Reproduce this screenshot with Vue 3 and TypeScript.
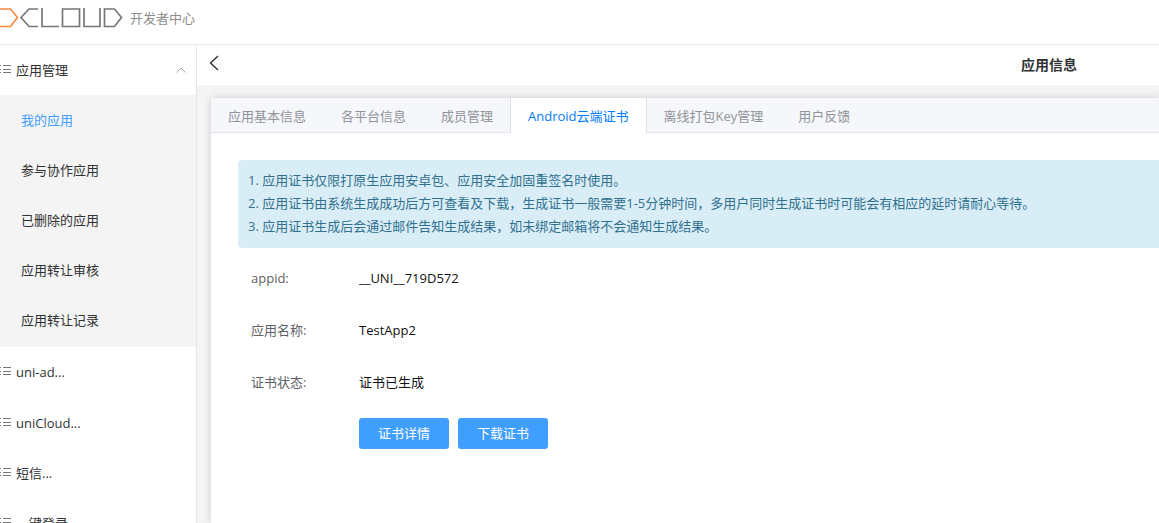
<script setup lang="ts">
import { ref } from 'vue'

const subItems: string[] = ['我的应用', '参与协作应用', '已删除的应用', '应用转让审核', '应用转让记录']
const activeItem = ref<string>('我的应用')
const groups: string[] = ['uni-ad...', 'uniCloud...', '短信...', '一键登录...']
const tabs: string[] = ['应用基本信息', '各平台信息', '成员管理', 'Android云端证书', '离线打包Key管理', '用户反馈']
const activeTab = ref<string>('Android云端证书')
const notices: string[] = [
  '1. 应用证书仅限打原生应用安卓包、应用安全加固重签名时使用。',
  '2. 应用证书由系统生成成功后方可查看及下载，生成证书一般需要1-5分钟时间，多用户同时生成证书时可能会有相应的延时请耐心等待。',
  '3. 应用证书生成后会通过邮件告知生成结果，如未绑定邮箱将不会通知生成结果。',
]
const fields: { label: string; value: string }[] = [
  { label: 'appid:', value: '__UNI__719D572' },
  { label: '应用名称:', value: 'TestApp2' },
  { label: '证书状态:', value: '证书已生成' },
]
</script>

<template>
  <div class="page">
    <header class="header">
      <a class="brand" href="#" aria-label="DCloud">
        <svg width="123" height="20" viewBox="0 0 123 20" fill="none" stroke-width="1.7">
          <path d="M0 1H10.5L17.5 9.5L10.5 18.5H0" stroke="#f58a42" />
          <g stroke="#777">
            <path d="M38 1H29L21 9.5L29 18.5H38" />
            <path d="M42 0V18.5H59" />
            <path d="M62.5 1H79.5V18.5H62.5Z" />
            <path d="M84 0V18.5H100V0" />
            <path d="M104.5 1H114.5L121.5 9.5L114.5 18.5H104.5Z" />
          </g>
        </svg>
      </a>
      <span class="subtitle">开发者中心</span>
    </header>
    <div class="body">
      <nav class="sidebar">
        <button class="group" type="button" aria-expanded="true">
          <svg class="list" width="12" height="10" viewBox="0 0 12 10" stroke="#777">
            <path d="M0 0.5H1M3 0.5H11M0 4.5H1M3 4.5H11M0 7.5H1M3 7.5H11" />
          </svg>
          <span>应用管理</span>
          <svg class="caret" width="10" height="6" viewBox="0 0 10 6" fill="none" stroke="#aaa">
            <path d="M0.5 5.5L5 1L9.5 5.5" />
          </svg>
        </button>
        <ul class="submenu">
          <li v-for="item in subItems" :key="item">
            <a href="#" :class="{ active: item === activeItem }" @click.prevent="activeItem = item">{{ item }}</a>
          </li>
        </ul>
        <button v-for="group in groups" :key="group" class="group" type="button">
          <svg class="list" width="12" height="10" viewBox="0 0 12 10" stroke="#777">
            <path d="M0 0.5H1M3 0.5H11M0 4.5H1M3 4.5H11M0 7.5H1M3 7.5H11" />
          </svg>
          <span>{{ group }}</span>
        </button>
      </nav>
      <main class="main">
        <div class="titlebar">
          <button class="back" type="button" aria-label="返回">
            <svg width="10" height="16" viewBox="0 0 10 16" fill="none" stroke="#303133" stroke-width="1.4">
              <path d="M9 1L1.5 8L9 15" />
            </svg>
          </button>
          <h1>应用信息</h1>
        </div>
        <section class="card">
          <div class="tabs" role="tablist">
            <button
              v-for="tab in tabs"
              :key="tab"
              type="button"
              role="tab"
              class="tab"
              :class="{ active: tab === activeTab }"
              :aria-selected="tab === activeTab"
              @click="activeTab = tab"
            >{{ tab }}</button>
          </div>
          <div class="panel">
            <div class="notice">
              <p v-for="line in notices" :key="line">{{ line }}</p>
            </div>
            <dl class="fields">
              <div v-for="field in fields" :key="field.label" class="field">
                <dt>{{ field.label }}</dt>
                <dd>{{ field.value }}</dd>
              </div>
            </dl>
            <div class="actions">
              <button type="button">证书详情</button>
              <button type="button">下载证书</button>
            </div>
          </div>
        </section>
      </main>
    </div>
  </div>
</template>

<style>
body {
  margin: 0;
}
</style>

<style scoped>
.page {
  display: flex;
  flex-direction: column;
  height: 100vh;
  overflow: hidden;
  background: #fff;
  color: #303133;
  font: 13px/20px "Open Sans", "Noto Sans CJK SC", sans-serif;
}
button {
  margin: 0;
  padding: 0;
  border: 0;
  background: none;
  color: inherit;
  font: inherit;
  cursor: pointer;
}
a {
  color: inherit;
  text-decoration: none;
}
.header {
  display: flex;
  flex: none;
  align-items: center;
  gap: 7px;
  height: 36px;
  padding-bottom: 8px;
  border-bottom: 1px solid #e8e8e8;
}
.brand {
  display: flex;
}
.subtitle {
  color: #8c8c8c;
}
.body {
  display: flex;
  flex: 1;
  min-height: 0;
}
.sidebar {
  flex: none;
  width: 196px;
  overflow: hidden;
  border-right: 1px solid #e6e6e6;
}
.group {
  display: flex;
  align-items: center;
  width: 100%;
  height: 50px;
}
.list {
  margin-right: 4px;
}
.caret {
  margin-right: 10px;
  margin-left: auto;
}
.submenu {
  margin: 0;
  padding-bottom: 2px;
  padding-left: 0;
  list-style: none;
  background: #f4f4f4;
}
.submenu a {
  display: block;
  padding-left: 21px;
  line-height: 50px;
}
.submenu .active {
  color: #409eff;
}
.submenu + .group {
  margin-bottom: 1px;
}
.main {
  display: flex;
  flex: 1;
  flex-direction: column;
  min-width: 0;
  overflow: hidden;
  background: #f4f4f4;
}
.titlebar {
  display: flex;
  flex: none;
  align-items: center;
  justify-content: space-between;
  height: 40px;
  padding: 0 82px 0 12px;
  background: #fff;
}
.back {
  display: flex;
  padding-bottom: 4px;
}
h1 {
  margin: 0;
  font-size: 14px;
  font-weight: 700;
}
.card {
  flex: 1;
  margin: 13px 0 0 14px;
  background: #fff;
  box-shadow: 0 0 8px rgba(0, 0, 0, 0.16);
}
.tabs {
  display: flex;
  height: 34px;
  border-bottom: 1px solid #dfe4ed;
  background: #f5f7fa;
}
.tab {
  height: 35px;
  margin-left: -1px;
  padding: 0 17px;
  border: 1px solid transparent;
  border-width: 0 1px;
  color: #909399;
  white-space: nowrap;
}
.tab.active {
  border-color: #dcdfe6;
  background: #fff;
  color: #007aff;
}
.panel {
  padding: 27px 0 0 27px;
}
.notice {
  padding: 9px 10px 10px;
  border-radius: 4px 0 0 4px;
  background: #d9edf7;
  color: #31708f;
  line-height: 23px;
  white-space: nowrap;
}
.notice p {
  margin: 0;
}
.fields {
  margin: 12px 0 0 13px;
}
.field {
  display: flex;
  margin-bottom: 16px;
  line-height: 36px;
}
dt {
  width: 108px;
  color: #606266;
}
dd {
  margin: 0;
  color: #111;
}
.actions {
  display: flex;
  gap: 9px;
  margin: 18px 0 0 121px;
}
.actions button {
  width: 90px;
  height: 31px;
  padding-bottom: 2px;
  border-radius: 3px;
  background: #409eff;
  color: #fff;
}
</style>
